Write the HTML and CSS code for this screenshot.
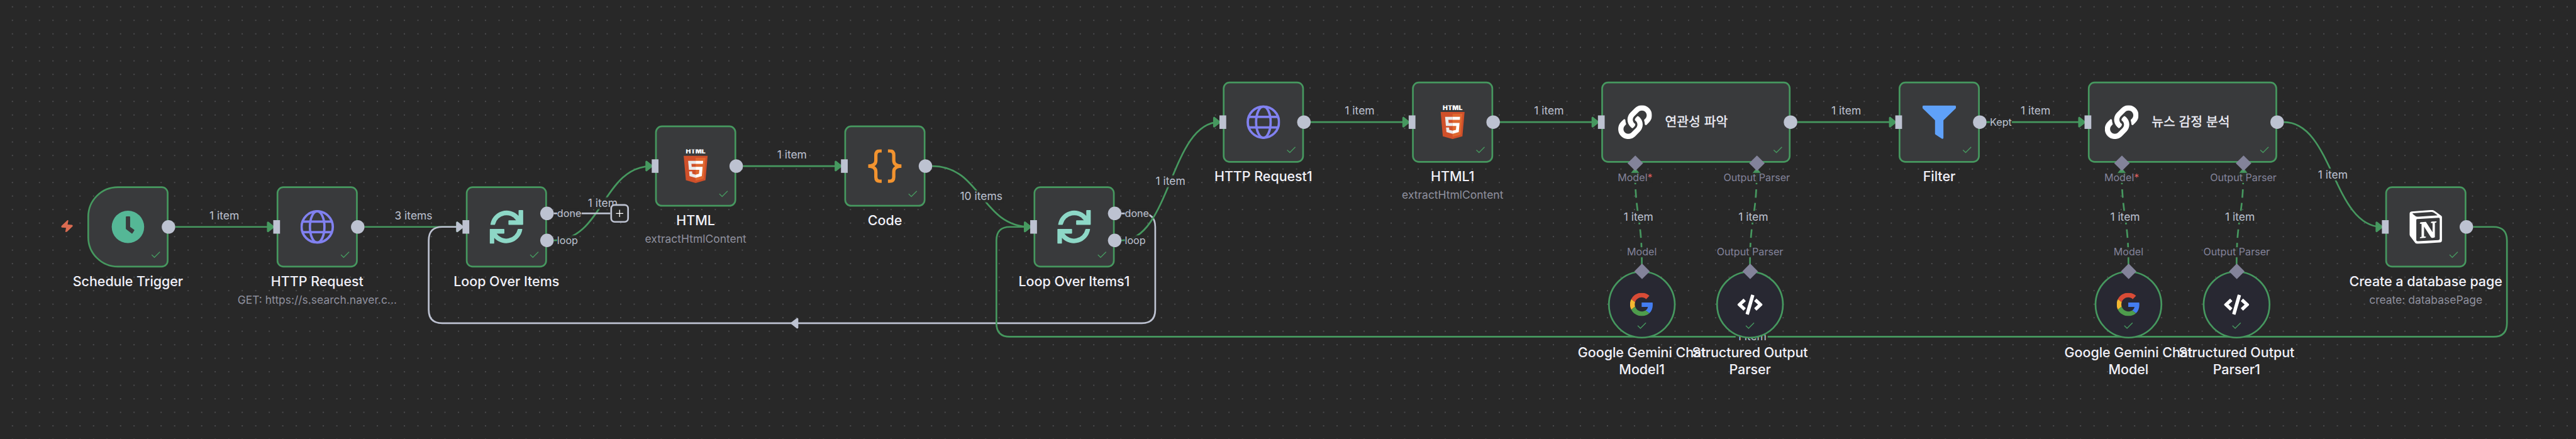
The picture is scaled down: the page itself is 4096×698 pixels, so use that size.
FILE: index.html
```html
<!DOCTYPE html>
<html lang="ko">
<head>
<meta charset="utf-8">
<title>Workflow</title>
<link rel="stylesheet" href="styles.css">
</head>
<body>
<svg class="defs" aria-hidden="true">
  <defs>
    <symbol id="check" viewBox="0 0 12 9"><path d="M1.1 4.9 4.3 8 10.8 1.5" fill="none" stroke="#46985f" stroke-width="1.05"/></symbol>
    <symbol id="clock" viewBox="-20 -20 40 40">
      <circle r="19.2" fill="#55b796"/>
      <path d="M-2.5-11.5q0-.9.9-.9h3.3q.9 0 .9.9V0L7.3 3.3q.6.4.2 1L5.3 7.6q-.5.6-1.1.1L-2.1 2.7q-.4-.3-.4-.9z" fill="#393a3c"/>
    </symbol>
    <symbol id="globe" viewBox="-20 -20 40 40">
      <g fill="none" stroke="#8181f0" stroke-width="2.8"><circle r="18.5"/><ellipse rx="8.6" ry="18.5"/><path d="M-17.6-6.2h35.2M-17.6 6.2h35.2"/></g>
    </symbol>
    <symbol id="loop" viewBox="186 184 220 219">
      <g fill="#8dd7c6">
        <path id="loopHalf" d="M192 277A106 106 0 0 1 375 222V188q0-4 4-4H401q4 0 4 4V276q0 4-4 4H313q-4 0-4-4V254q0-4 4-4H359A76 76 0 0 0 222.500 276q-.5 4-4 4H195q-3 0-3-3z"/>
        <use href="#loopHalf" transform="rotate(180 295.800 293.500)"/>
      </g>
    </symbol>
    <symbol id="html5" viewBox="0 0 512 512">
      <text x="256" y="69" class="html5-word" text-anchor="middle" textLength="298" lengthAdjust="spacingAndGlyphs">HTML</text>
      <path fill="#d0502a" d="M107.600 471l-33-370.400h362.800l-33 370.200L255.700 512"/>
      <path fill="#df672f" d="M256 480.500V131H404.300L376 447"/>
      <path fill="#e9e9e9" d="M142 176.300h114v45.400h-64.200l4.200 46.500h60v45.300H154.400M156.400 336.300H202l3.200 36.300 50.800 13.600v47.400l-93.200-26"/>
      <path fill="#fff" d="M369.600 176.300H255.800v45.400h109.600M361.300 268.200H255.800v45.400h56l-5.300 59-50.700 13.600v47.200l93-25.800"/>
    </symbol>
    <symbol id="braces" viewBox="28 28 40 40">
      <g fill="none" stroke="#f2932f" stroke-width="3.9">
        <path d="M44.200 30H42.200Q37.300 30 37.300 35V41.400Q37.300 44.800 34.600 46.400 32.400 48 28.300 48"/>
        <path d="M44.200 66H42.200Q37.300 66 37.300 61V54.600Q37.300 51.200 34.600 49.600 32.400 48 28.300 48"/>
        <path d="M51.600 30H53.600Q58.500 30 58.500 35V41.400Q58.500 44.800 61.200 46.400 63.400 48 67.500 48"/>
        <path d="M51.600 66H53.600Q58.500 66 58.500 61V54.600Q58.500 51.200 61.200 49.600 63.400 48 67.500 48"/>
      </g>
    </symbol>
    <symbol id="chain" viewBox="0 0 512 512"><path fill="#fff" d="M326.612 185.391c59.747 59.809 58.927 155.698.36 214.590-.11.12-.24.25-.36.37l-67.200 67.200c-59.270 59.270-155.699 59.262-214.960 0-59.270-59.260-59.270-155.700 0-214.960l37.106-37.106c9.840-9.840 26.786-3.300 27.294 10.606.648 17.722 3.826 35.527 9.690 52.721 1.986 5.822.567 12.262-3.783 16.612l-13.087 13.087c-28.026 28.026-28.905 73.660-1.155 101.960 28.024 28.579 74.086 28.749 102.325.51l67.200-67.190c28.191-28.191 28.073-73.757 0-101.830-3.701-3.694-7.429-6.564-10.341-8.569a16.037 16.037 0 0 1-6.947-12.606c-.396-10.567 3.348-21.456 11.698-29.806l21.054-21.055c5.521-5.521 14.182-6.199 20.584-1.731a152.482 152.482 0 0 1 20.522 17.197zM467.547 44.449c-59.261-59.262-155.690-59.270-214.960 0l-67.200 67.200c-.12.12-.25.25-.36.37-58.566 58.892-59.387 154.781.36 214.590a152.454 152.454 0 0 0 20.521 17.196c6.402 4.468 15.064 3.789 20.584-1.731l21.054-21.055c8.350-8.350 12.094-19.239 11.698-29.806a16.037 16.037 0 0 0-6.947-12.606c-2.912-2.005-6.640-4.875-10.341-8.569-28.073-28.073-28.191-73.639 0-101.830l67.200-67.190c28.239-28.239 74.300-28.069 102.325.51 27.750 28.300 26.872 73.934-1.155 101.960l-13.087 13.087c-4.350 4.350-5.769 10.790-3.783 16.612 5.864 17.194 9.042 34.999 9.690 52.721.509 13.906 17.454 20.446 27.294 10.606l37.106-37.106c59.271-59.259 59.271-155.699.001-214.959z"/></symbol>
    <symbol id="funnel" viewBox="27.500 28 40.500 40"><path fill="#5fa1f9" d="M29.300 28H66.300Q68 28 68 29.700V30.200Q68 31 67.400 31.700L52.800 45.800V66.600Q52.800 68 51.500 68 50.900 68 50.300 67.500L43.400 63Q42.700 62.500 42.700 61.700V45.800L28.100 31.700Q27.500 31 27.500 30.200V29.700Q27.500 28 29.300 28z"/></symbol>
    <symbol id="notion" viewBox="0 0 96 100"><path fill="#fff" fill-rule="evenodd" d="M61.350 0.227l-55.333 4.087C1.553 4.700 0 7.617 0 11.113v60.660c0 2.723 0.967 5.053 3.300 8.167l13.007 16.913c2.137 2.723 4.080 3.307 8.160 3.113l64.257 -3.890c5.433 -0.387 6.990 -2.917 6.990 -7.193V20.640c0 -2.210 -0.873 -2.847 -3.443 -4.733L74.167 3.143c-4.273 -3.107 -6.020 -3.500 -12.817 -2.917zM25.920 19.523c-5.247 0.353 -6.437 0.433 -9.417 -1.990L8.927 11.507c-0.770 -0.780 -0.383 -1.753 1.557 -1.947l53.193 -3.887c4.467 -0.390 6.793 1.167 8.540 2.527l9.123 6.610c0.390 0.197 1.360 1.360 0.193 1.360l-54.933 3.307 -0.680 0.047zM19.803 88.300V30.367c0 -2.530 0.777 -3.697 3.103 -3.893L86 22.780c2.140 -0.193 3.107 1.167 3.107 3.693v57.547c0 2.530 -0.390 4.670 -3.883 4.863l-60.377 3.500c-3.493 0.193 -5.043 -0.970 -5.043 -4.083zm59.600 -54.827c0.387 1.750 0 3.500 -1.750 3.700l-2.910 0.577v42.773c-2.527 1.360 -4.853 2.137 -6.797 2.137 -3.107 0 -3.883 -0.973 -6.210 -3.887l-19.030 -29.940v28.967l6.020 1.363s0 3.500 -4.857 3.500l-13.390 0.777c-0.390 -0.780 0 -2.723 1.357 -3.110l3.497 -0.970v-38.300L30.480 40.667c-0.390 -1.750 0.580 -4.277 3.300 -4.473l14.367 -0.967 19.800 30.327v-26.830l-5.047 -0.580c-0.390 -2.143 1.163 -3.700 3.103 -3.890l13.400 -0.780z"/></symbol>
    <symbol id="google" viewBox="0 0 48 48">
      <path fill="#d84b36" d="M24 9.500c3.540 0 6.710 1.220 9.210 3.600l6.850-6.850C35.900 2.380 30.470 0 24 0 14.620 0 6.510 5.380 2.560 13.220l7.980 6.190C12.430 13.720 17.740 9.500 24 9.500z"/>
      <path fill="#447df0" d="M46.980 24.550c0-1.570-.15-3.090-.38-4.550H24v9.020h12.940c-.58 2.960-2.260 5.480-4.780 7.180l7.730 6c4.510-4.180 7.090-10.360 7.090-17.650z"/>
      <path fill="#f4b831" d="M10.530 28.590c-.48-1.450-.76-2.990-.76-4.590s.27-3.140.76-4.590l-7.980-6.190C.92 16.460 0 20.120 0 24c0 3.880.92 7.540 2.560 10.780l7.970-6.190z"/>
      <path fill="#4e9c4c" d="M24 48c6.480 0 11.930-2.130 15.890-5.810l-7.730-6c-2.150 1.450-4.920 2.300-8.160 2.300-6.260 0-11.570-4.220-13.470-9.910l-7.980 6.190C6.510 42.620 14.620 48 24 48z"/>
    </symbol>
    <symbol id="code" viewBox="0 0 640 512"><path fill="#fff" d="M278.900 511.500l-61-17.700c-6.400-1.800-10-8.500-8.200-14.900L346.200 8.700c1.800-6.400 8.500-10 14.900-8.200l61 17.700c6.400 1.800 10 8.500 8.200 14.900L293.800 503.300c-1.900 6.400-8.500 10.100-14.900 8.200zm-114-112.200l43.500-46.400c4.600-4.900 4.300-12.700-.8-17.200L117 256l90.600-79.700c5.100-4.500 5.500-12.300.8-17.200l-43.500-46.400c-4.500-4.800-12.100-5.100-17-.5L3.800 247.200c-5.100 4.700-5.100 12.800 0 17.500l144.100 135.100c4.900 4.600 12.500 4.400 17-.5zm327.200.6l144.100-135.100c5.100-4.700 5.100-12.800 0-17.500L492.100 112.100c-4.800-4.500-12.400-4.300-17 .5L431.600 159c-4.600 4.900-4.300 12.700.8 17.200L523 256l-90.600 79.700c-5.100 4.500-5.500 12.300-.8 17.200l43.500 46.400c4.500 4.900 12.100 5.100 17 .6z"/></symbol>
  </defs>
</svg>

<main class="canvas">
  <svg class="dots" aria-hidden="true">
    <defs><pattern id="grid" width="21.493" height="21.493" patternUnits="userSpaceOnUse" patternTransform="translate(9.030 0.020)"><circle cx="10.746" cy="10.746" r=".82" fill="#707074"/></pattern></defs>
    <rect width="100%" height="100%" fill="url(#grid)"/>
  </svg>

  <div class="world">
    <svg class="edges" width="2900" height="360" viewBox="0 -150 2900 360">
      <defs>
        <marker id="arrowGreen" viewBox="-10 -10 20 20" markerWidth="25" markerHeight="25" markerUnits="userSpaceOnUse" orient="auto-start-reverse"><polyline points="-5,-4 0,0 -5,4 -5,-4" fill="#46985f" stroke="#46985f" stroke-width="2" stroke-linecap="round" stroke-linejoin="round"/></marker>
        <marker id="arrowGray" viewBox="-10 -10 20 20" markerWidth="25" markerHeight="25" markerUnits="userSpaceOnUse" orient="auto-start-reverse"><polyline points="-5,-4 0,0 -5,4 -5,-4" fill="#bdc2d1" stroke="#bdc2d1" stroke-width="2" stroke-linecap="round" stroke-linejoin="round"/></marker>
      </defs>
      <g class="edge">
        <path d="M104 48H220"/>
        <path d="M328 48H444"/>
        <path d="M552 64C610 64 610-24 668-24"/>
        <path d="M776-24H892"/>
        <path d="M1000-24C1058-24 1058 48 1116 48"/>
      </g>
      <g class="edge edge-pending">
        <path d="M1224 32H1248Q1264 32 1264 48V146Q1264 162 1248 162H834"/>
        <path d="M834 162H420Q404 162 404 146V64Q404 48 420 48H444"/>
      </g>
      <g class="edge">
        <path d="M1224 64C1282 64 1282-76 1340-76"/>
        <path d="M1448-76H1564"/>
        <path d="M1672-76H1788"/>
        <path d="M2024-76H2140"/>
        <path d="M2248-76H2364"/>
        <path d="M2600-76C2658-76 2658 48 2716 48"/>
        <path d="M2824 48H2848Q2864 48 2864 64V162Q2864 178 2848 178H1970"/>
        <path d="M1970 178H1092Q1076 178 1076 162V64Q1076 48 1092 48H1116"/>
      </g>
      <g class="edge edge-sub">
        <path d="M1840 92C1840 36 1832 36 1832-20"/>
        <path d="M1968 92C1968 36 1976 36 1976-20"/>
        <path d="M2416 92C2416 36 2408 36 2408-20"/>
        <path d="M2544 92C2544 36 2552 36 2552-20"/>
      </g>
      <g class="edge-label">
        <g transform="translate(162 34.600)"><text y="4.500">1 item</text></g>
        <g transform="translate(386 34.600)"><text y="4.500">3 items</text></g>
        <g transform="translate(610 20)"><rect x="-19" y="-7" width="38" height="14"/><text y="4.500">1 item</text></g>
        <g transform="translate(834 -37.400)"><text y="4.500">1 item</text></g>
        <g transform="translate(1058 12)"><rect x="-26" y="-7" width="52" height="14"/><text y="4.500">10 items</text></g>
        <g transform="translate(1282 -6)"><rect x="-19" y="-7" width="38" height="14"/><text y="4.500">1 item</text></g>
        <g transform="translate(1506 -89.400)"><text y="4.500">1 item</text></g>
        <g transform="translate(1730 -89.400)"><text y="4.500">1 item</text></g>
        <g transform="translate(2082 -89.400)"><text y="4.500">1 item</text></g>
        <g transform="translate(2306 -89.400)"><text y="4.500">1 item</text></g>
        <g transform="translate(2658 -14)"><rect x="-19" y="-7" width="38" height="14"/><text y="4.500">1 item</text></g>
        <g transform="translate(1970 178)"><rect x="-19" y="-7" width="38" height="14"/><text y="4.500">1 item</text></g>
        <g transform="translate(1836 36)"><rect x="-19" y="-7" width="38" height="14"/><text y="4.500">1 item</text></g>
        <g transform="translate(1972 36)"><rect x="-19" y="-7" width="38" height="14"/><text y="4.500">1 item</text></g>
        <g transform="translate(2412 36)"><rect x="-19" y="-7" width="38" height="14"/><text y="4.500">1 item</text></g>
        <g transform="translate(2548 36)"><rect x="-19" y="-7" width="38" height="14"/><text y="4.500">1 item</text></g>
      </g>
    </svg>

    <section class="node trigger pos-schedule">
      <svg class="bolt" viewBox="95 398 45 79" preserveAspectRatio="none"><path fill="#db6b51" d="M119 399Q122 397 123 401L120 426 137 428Q141 430 140 437L117 474Q112 479 111 473L114 448 97 446Q94 443 95 436z"/></svg>
      <div class="card"><svg class="icon"><use href="#clock"/></svg><svg class="check"><use href="#check"/></svg></div>
      <i class="port out"></i>
      <h2 class="name">Schedule Trigger</h2>
    </section>

    <section class="node pos-http">
      <div class="card"><svg class="icon"><use href="#globe"/></svg><svg class="check"><use href="#check"/></svg></div>
      <i class="port in"></i><i class="port out"></i>
      <h2 class="name">HTTP Request</h2>
      <p class="detail">GET: https://s.search.naver.c...</p>
    </section>

    <section class="node pos-loop">
      <div class="card"><svg class="icon"><use href="#loop"/></svg><svg class="check"><use href="#check"/></svg></div>
      <i class="port in"></i>
      <div class="add-next"><span class="add-line"></span><span class="add-box"><svg viewBox="0 0 10 10"><path d="M5 .7V9.300M.7 5H9.300" stroke="#fff" stroke-width=".95"/></svg></span></div>
      <i class="port out upper"></i><i class="port out lower"></i>
      <span class="port-label upper">done</span><span class="port-label lower">loop</span>
      <h2 class="name">Loop Over Items</h2>
    </section>

    <section class="node pos-html">
      <div class="card"><svg class="icon"><use href="#html5"/></svg><svg class="check"><use href="#check"/></svg></div>
      <i class="port in"></i><i class="port out"></i>
      <h2 class="name">HTML</h2>
      <p class="detail">extractHtmlContent</p>
    </section>

    <section class="node pos-code">
      <div class="card"><svg class="icon"><use href="#braces"/></svg><svg class="check"><use href="#check"/></svg></div>
      <i class="port in"></i><i class="port out"></i>
      <h2 class="name">Code</h2>
    </section>

    <section class="node pos-loop1">
      <div class="card"><svg class="icon"><use href="#loop"/></svg><svg class="check"><use href="#check"/></svg></div>
      <i class="port in"></i><i class="port out upper"></i><i class="port out lower"></i>
      <span class="port-label upper">done</span><span class="port-label lower">loop</span>
      <h2 class="name">Loop Over Items1</h2>
    </section>

    <section class="node pos-http1">
      <div class="card"><svg class="icon"><use href="#globe"/></svg><svg class="check"><use href="#check"/></svg></div>
      <i class="port in"></i><i class="port out"></i>
      <h2 class="name">HTTP Request1</h2>
    </section>

    <section class="node pos-html1">
      <div class="card"><svg class="icon"><use href="#html5"/></svg><svg class="check"><use href="#check"/></svg></div>
      <i class="port in"></i><i class="port out"></i>
      <h2 class="name">HTML1</h2>
      <p class="detail">extractHtmlContent</p>
    </section>

    <section class="node wide pos-relevance">
      <div class="card"><svg class="icon"><use href="#chain"/></svg><h2 class="inner-name">연관성 파악</h2><svg class="check"><use href="#check"/></svg></div>
      <i class="port in"></i><i class="port out"></i>
      <i class="diamond model"></i><i class="diamond parser"></i>
      <span class="sub-label model">Model<b>*</b></span><span class="sub-label parser">Output Parser</span>
    </section>

    <section class="node pos-filter">
      <div class="card"><svg class="icon"><use href="#funnel"/></svg><svg class="check"><use href="#check"/></svg></div>
      <i class="port in"></i><i class="port out"></i>
      <span class="port-label">Kept</span>
      <h2 class="name">Filter</h2>
    </section>

    <section class="node wide pos-sentiment">
      <div class="card"><svg class="icon"><use href="#chain"/></svg><h2 class="inner-name">뉴스 감정 분석</h2><svg class="check"><use href="#check"/></svg></div>
      <i class="port in"></i><i class="port out"></i>
      <i class="diamond model"></i><i class="diamond parser"></i>
      <span class="sub-label model">Model<b>*</b></span><span class="sub-label parser">Output Parser</span>
    </section>

    <section class="node pos-notion">
      <div class="card"><svg class="icon"><use href="#notion"/></svg><svg class="check"><use href="#check"/></svg></div>
      <i class="port in"></i><i class="port out"></i>
      <h2 class="name">Create a database page</h2>
      <p class="detail">create: databasePage</p>
    </section>

    <section class="node round pos-gemini1">
      <div class="card"><svg class="icon google"><use href="#google"/></svg><svg class="check"><use href="#check"/></svg></div>
      <i class="diamond"></i><span class="sub-label">Model</span>
      <h2 class="name">Google Gemini Chat<br>Model1</h2>
    </section>
    <section class="node round pos-parser">
      <div class="card"><svg class="icon"><use href="#code"/></svg><svg class="check"><use href="#check"/></svg></div>
      <i class="diamond"></i><span class="sub-label">Output Parser</span>
      <h2 class="name">Structured Output<br>Parser</h2>
    </section>
    <section class="node round pos-gemini">
      <div class="card"><svg class="icon google"><use href="#google"/></svg><svg class="check"><use href="#check"/></svg></div>
      <i class="diamond"></i><span class="sub-label">Model</span>
      <h2 class="name">Google Gemini Chat<br>Model</h2>
    </section>
    <section class="node round pos-parser1">
      <div class="card"><svg class="icon"><use href="#code"/></svg><svg class="check"><use href="#check"/></svg></div>
      <i class="diamond"></i><span class="sub-label">Output Parser</span>
      <h2 class="name">Structured Output<br>Parser1</h2>
    </section>
  </div>
</main>
</body>
</html>
```
FILE: styles.css
```css
:root {
  --canvas: #282828;
  --card: #393a3c;
  --green: #46985f;
  --port: #bdc2d1;
  --sub: #83839a;
}

* { box-sizing: border-box; }

body {
  margin: 0;
  background: var(--canvas);
  font-family: "Inter", "Noto Sans CJK KR", sans-serif;
}

.defs { position: absolute; width: 0; height: 0; }

.canvas {
  position: relative;
  width: 4096px;
  height: 698px;
  overflow: hidden;
}

.dots { display: block; width: 100%; height: 100%; }

/* Flow coordinates: the origin is the top left corner of the trigger node */
.world {
  position: absolute;
  left: 0;
  top: 0;
  width: 2900px;
  height: 200px;
  transform-origin: 0 0;
  transform: translate(138.970px, 296.300px) scale(1.3433);
}

.edges { position: absolute; left: 0; top: -150px; overflow: visible; }
.edge path { fill: none; stroke: var(--green); stroke-width: 2; marker-end: url(#arrowGreen); }
.edge-pending path { stroke: var(--port); marker-end: url(#arrowGray); }
.edge-sub path { stroke-dasharray: 8 8; stroke-linecap: square; }
.edge-label text { font-size: 13px; fill: var(--port); text-anchor: middle; }
.edge-label rect { fill: var(--canvas); opacity: .9; }
.html5-word { font: 900 92px "Inter", sans-serif; fill: #fff; }

.node { position: absolute; width: 96px; }
.node.wide { width: 224px; }
.node.round { width: 80px; }

.pos-schedule { left: 0; top: 0; }
.pos-http { left: 224px; top: 0; }
.pos-loop { left: 448px; top: 0; }
.pos-html { left: 672px; top: -72px; }
.pos-code { left: 896px; top: -72px; }
.pos-loop1 { left: 1120px; top: 0; }
.pos-http1 { left: 1344px; top: -124px; }
.pos-html1 { left: 1568px; top: -124px; }
.pos-relevance { left: 1792px; top: -124px; }
.pos-filter { left: 2144px; top: -124px; }
.pos-sentiment { left: 2368px; top: -124px; }
.pos-notion { left: 2720px; top: 0; }
.pos-gemini1 { left: 1800px; top: 100px; }
.pos-parser { left: 1928px; top: 100px; }
.pos-gemini { left: 2376px; top: 100px; }
.pos-parser1 { left: 2504px; top: 100px; }

.card {
  position: relative;
  display: flex;
  align-items: center;
  justify-content: center;
  height: 96px;
  background: var(--card);
  border: 2px solid var(--green);
  border-radius: 8px;
}
.trigger .card { border-radius: 36px 8px 8px 36px; }
.wide .card { justify-content: flex-start; padding-left: 18px; gap: 15.500px; }
.round .card { height: 80px; border-radius: 50%; background: #282832; }

.icon { display: block; flex: none; width: 40px; height: 40px; }
.round .icon { width: 30px; height: 30px; }
.round .icon.google { width: 27.500px; height: 27.500px; }

.check { position: absolute; right: 7.200px; bottom: 9px; width: 12px; height: 9px; }
.round .check { left: 32.200px; right: auto; bottom: 8.800px; }

.bolt { position: absolute; left: -30.700px; top: 39.600px; width: 13.600px; height: 14.500px; }

.port { position: absolute; top: 40px; background: var(--port); }
.port.in { left: -4px; width: 8px; height: 16px; }
.port.out { right: -8px; width: 16px; height: 16px; border-radius: 50%; }
.port.upper { top: 24px; }
.port.lower { top: 56px; }

.port-label {
  position: absolute;
  left: 108px;
  top: 42px;
  height: 12px;
  background: rgba(40, 40, 40, .9);
  color: var(--port);
  font-size: 12px;
  line-height: 11.200px;
}
.port-label.upper { top: 26px; }
.port-label.lower { top: 58px; }

.add-next { position: absolute; left: 104px; top: 21px; display: flex; align-items: center; }
.add-line { width: 67px; height: 2px; background: var(--port); }
.add-box {
  display: flex;
  align-items: center;
  justify-content: center;
  width: 22px;
  height: 22px;
  border: 2px solid var(--port);
  border-radius: 5px;
  background: var(--canvas);
}
.add-box svg { width: 10px; height: 10px; }

.diamond {
  position: absolute;
  left: 33.750px;
  top: -6.250px;
  width: 12.500px;
  height: 12.500px;
  background: var(--sub);
  transform: rotate(45deg);
}
.wide .diamond { top: 89.750px; }
.wide .diamond.parser { left: 177.750px; }

.sub-label {
  position: absolute;
  left: 40px;
  top: -28px;
  height: 12px;
  transform: translateX(-50%);
  background: rgba(40, 40, 40, .9);
  color: var(--sub);
  font-size: 12px;
  line-height: 11.200px;
  white-space: nowrap;
}
.wide .sub-label { top: 108px; }
.wide .sub-label.parser { left: 184px; }
.sub-label b { color: #dc5f5f; font-weight: 400; }

.name {
  width: 200px;
  margin: 5.600px 0 0 -52px;
  color: #f1f1f9;
  font-size: 16px;
  font-weight: 500;
  line-height: 20px;
  letter-spacing: -.04px;
  text-align: center;
  white-space: nowrap;
}
.round .name { margin-left: -60px; }

.inner-name {
  margin: 0;
  color: #f1f1f9;
  font-size: 15.200px;
  font-weight: 400;
  -webkit-text-stroke: .25px #f1f1f9;
  line-height: 20px;
  white-space: nowrap;
}

.detail {
  width: 200px;
  margin: 4.200px 0 0 -52px;
  color: #8f909e;
  font-size: 13px;
  line-height: 16px;
  text-align: center;
  white-space: nowrap;
}
```
